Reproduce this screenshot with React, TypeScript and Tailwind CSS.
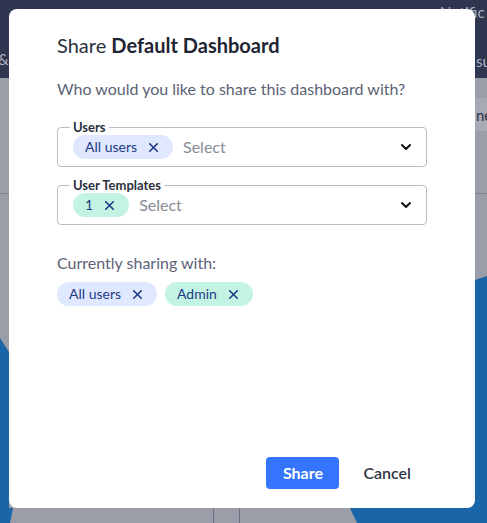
import { X, ChevronDown } from "lucide-react";

type ChipProps = { label: string; tone: "blue" | "mint" };

function Chip({ label, tone }: ChipProps) {
  return (
    <span
      className={`inline-flex h-6 items-center gap-[9px] rounded-full pl-3 pr-3 text-[14px] leading-none text-[#1f3a86] ${
        tone === "blue" ? "bg-[#dfe8fe]" : "bg-[#c2f3e3]"
      }`}
    >
      {label}
      <X size={15} strokeWidth={2.6} />
    </span>
  );
}

function SelectField({ legend, chip, tone }: { legend: string; chip: string; tone: "blue" | "mint" }) {
  return (
    <fieldset className="flex h-[48px] items-start rounded-[4px] border border-[#b9bcc4] pb-[6px] pl-3 pr-3">
      <legend className="px-[3px] text-[13px] font-bold leading-4 text-[#2a2f3d]">{legend}</legend>
      <div className="flex flex-1 items-center pl-[3px]">
        <Chip label={chip} tone={tone} />
        <span className="ml-[10px] flex-1 text-[16px] leading-6 text-[#878c97]">Select</span>
        <ChevronDown size={16} strokeWidth={3} className="text-[#111]" />
      </div>
    </fieldset>
  );
}

export default function App() {
  return (
    <div className="relative h-[523px] w-[487px] overflow-hidden bg-[#9b9ea9] font-['Lato',sans-serif]">
      {/* backdrop page */}
      <div className="h-[78px] bg-[#2e3650]" />
      <div className="absolute right-0 top-[98px] h-[33px] w-[14px] bg-[#a7a9b4]" />
      <svg className="absolute inset-0" width="487" height="523" viewBox="0 0 487 523">
        <polygon points="0,338 9,352 9,508 13,508 10,523 0,523" fill="#1a65a8" />
        <polygon points="350,508 475,280 487,276 487,523 357,523" fill="#1a65a8" />
        <line x1="0" y1="193.5" x2="487" y2="193.5" stroke="#7d808d" strokeWidth="1" />
        <line x1="213.5" y1="508" x2="213.5" y2="523" stroke="#6f7280" strokeWidth="1" />
        <line x1="239.5" y1="508" x2="239.5" y2="523" stroke="#6f7280" strokeWidth="1" />
      </svg>
      <span className="absolute left-[440px] top-[1px] text-[15px] text-[#aeb3c2]">Notific</span>
      <span className="absolute left-[-2px] top-[48px] text-[15px] text-[#aeb3c2]">&amp;</span>
      <span className="absolute left-[476px] top-[50px] text-[15px] text-[#aeb3c2]">su</span>
      <span className="absolute left-[476px] top-[104px] text-[15px] text-[#2e3346]">ne</span>

      {/* modal */}
      <div className="absolute left-[9px] top-[9px] flex h-[499px] w-[466px] flex-col rounded-lg bg-white px-12 pb-[19px] pt-[23px]">
        <h2 className="text-[20px] leading-[26px] text-[#2b3040]">
          Share <span className="font-bold text-[#1f2433]">Default Dashboard</span>
        </h2>
        <p className="mt-[21px] text-[16px] leading-5 text-[#5b6275]">Who would you like to share this dashboard with?</p>

        <div className="mt-5">
          <SelectField legend="Users" chip="All users" tone="blue" />
        </div>
        <div className="mt-[10px]">
          <SelectField legend="User Templates" chip="1" tone="mint" />
        </div>

        <p className="mt-7 text-[16px] leading-5 text-[#5b6275]">Currently sharing with:</p>
        <div className="mt-[9px] flex gap-2">
          <Chip label="All users" tone="blue" />
          <Chip label="Admin" tone="mint" />
        </div>

        <div className="mt-auto flex justify-end gap-2">
          <button className="h-8 w-[73px] rounded-[4px] bg-[#3575fd] text-[16px] font-bold text-white">Share</button>
          <button className="h-8 px-4 text-[16px] font-semibold text-[#2f3447]">Cancel</button>
        </div>
      </div>
    </div>
  );
}
